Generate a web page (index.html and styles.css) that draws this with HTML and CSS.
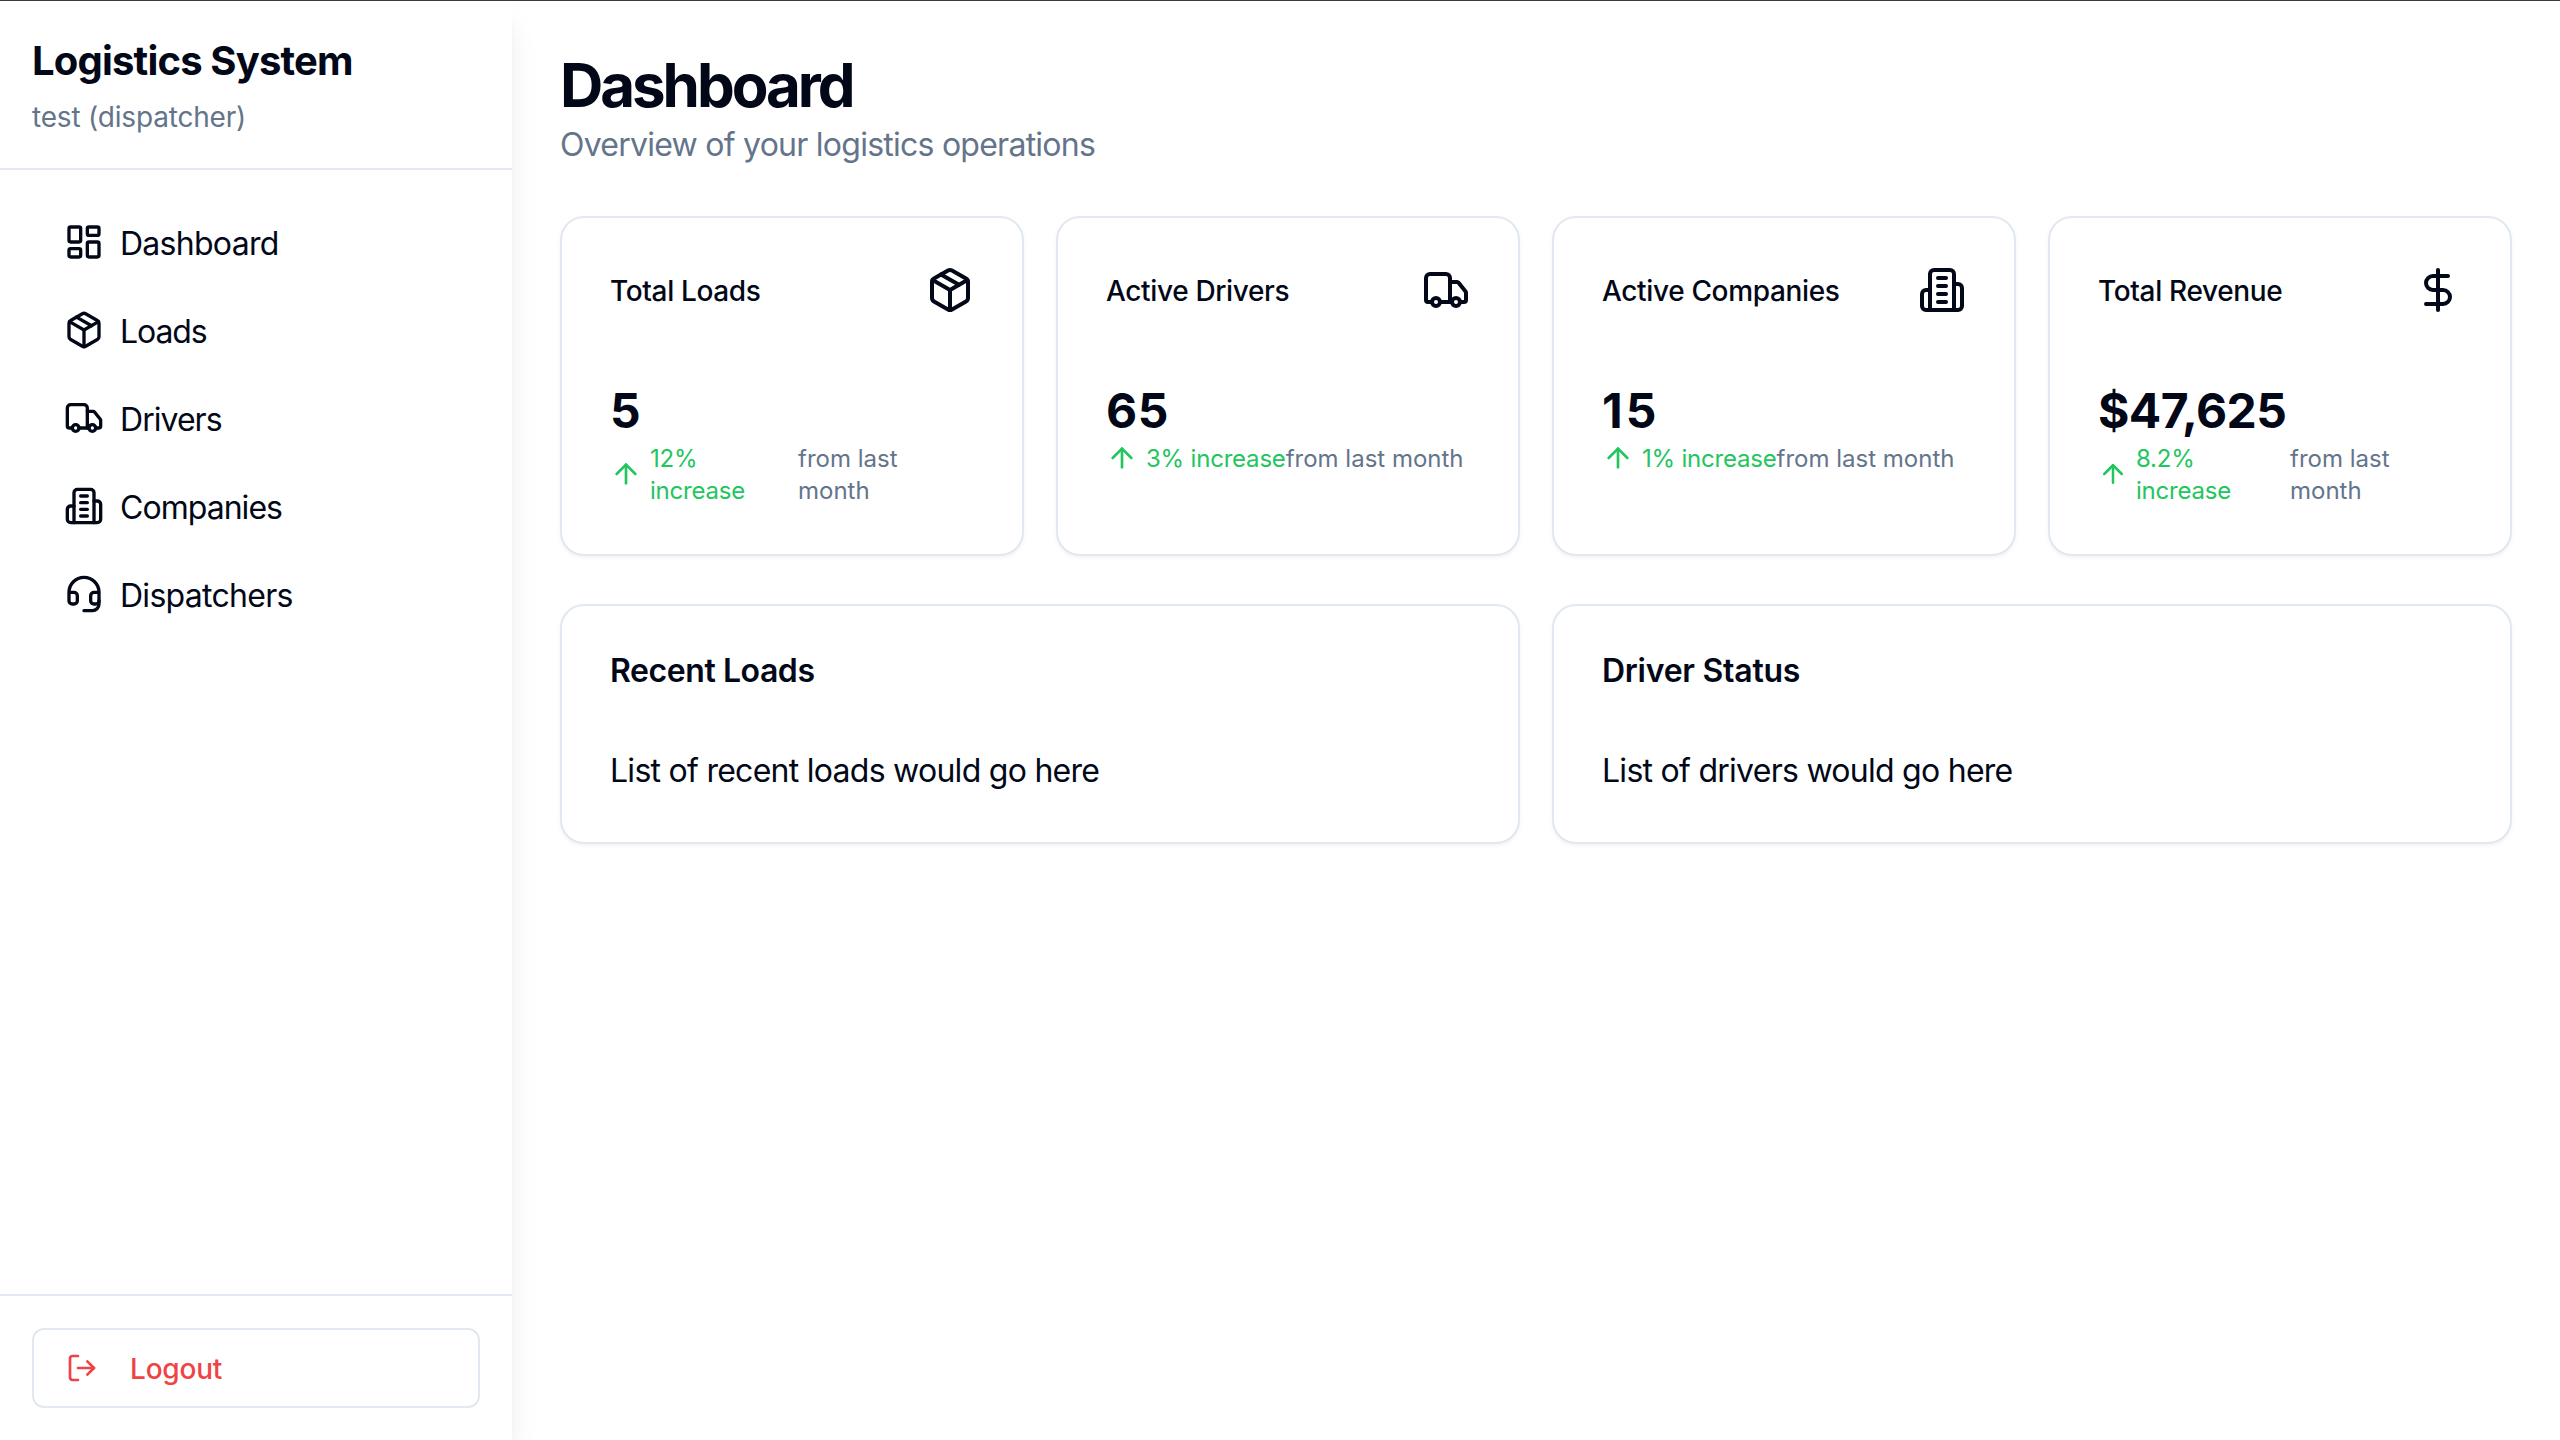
FILE: index.html
```
<!DOCTYPE html>
<html lang="en">
<head>
<meta charset="utf-8">
<title>Logistics System</title>
<link rel="stylesheet" href="styles.css">
</head>
<body>
<svg class="sprite" aria-hidden="true">
  <symbol id="package" viewBox="0 0 24 24"><path d="m7.5 4.27 9 5.15"/><path d="M21 8a2 2 0 0 0-1-1.73l-7-4a2 2 0 0 0-2 0l-7 4A2 2 0 0 0 3 8v8a2 2 0 0 0 1 1.73l7 4a2 2 0 0 0 2 0l7-4A2 2 0 0 0 21 16Z"/><path d="m3.3 7 8.7 5 8.7-5"/><path d="M12 22V12"/></symbol>
  <symbol id="truck" viewBox="0 0 24 24"><path d="M14 18V6a2 2 0 0 0-2-2H4a2 2 0 0 0-2 2v11a1 1 0 0 0 1 1h2"/><path d="M15 18H9"/><path d="M19 18h2a1 1 0 0 0 1-1v-3.65a1 1 0 0 0-.22-.624l-3.48-4.35A1 1 0 0 0 17.520 8H14"/><circle cx="17" cy="18" r="2"/><circle cx="7" cy="18" r="2"/></symbol>
  <symbol id="building" viewBox="0 0 24 24"><path d="M6 22V4a2 2 0 0 1 2-2h8a2 2 0 0 1 2 2v18Z"/><path d="M6 12H4a2 2 0 0 0-2 2v6a2 2 0 0 0 2 2h2"/><path d="M18 9h2a2 2 0 0 1 2 2v9a2 2 0 0 1-2 2h-2"/><path d="M10 6h4"/><path d="M10 10h4"/><path d="M10 14h4"/><path d="M10 18h4"/></symbol>
  <symbol id="arrow-up" viewBox="0 0 24 24"><path d="m5 12 7-7 7 7"/><path d="M12 19V5"/></symbol>
</svg>
<div class="app">
  <aside class="sidebar">
    <header class="brand">
      <h2 class="brand-name">Logistics System</h2>
      <p class="brand-user">test (dispatcher)</p>
    </header>
    <nav class="nav">
      <a class="nav-item"><svg class="icon" viewBox="0 0 24 24"><rect width="7" height="9" x="3" y="3" rx="1"/><rect width="7" height="5" x="14" y="3" rx="1"/><rect width="7" height="9" x="14" y="12" rx="1"/><rect width="7" height="5" x="3" y="16" rx="1"/></svg><span>Dashboard</span></a>
      <a class="nav-item"><svg class="icon"><use href="#package"/></svg><span class="tight">Loads</span></a>
      <a class="nav-item"><svg class="icon"><use href="#truck"/></svg><span class="snug">Drivers</span></a>
      <a class="nav-item"><svg class="icon"><use href="#building"/></svg><span class="snug">Companies</span></a>
      <a class="nav-item"><svg class="icon" viewBox="0 0 24 24"><path d="M3 11h3a2 2 0 0 1 2 2v3a2 2 0 0 1-2 2H5a2 2 0 0 1-2-2v-5Zm0 0a9 9 0 1 1 18 0m0 0v5a2 2 0 0 1-2 2h-1a2 2 0 0 1-2-2v-3a2 2 0 0 1 2-2h3Z"/><path d="M21 16v2a4 4 0 0 1-4 4h-5"/></svg><span>Dispatchers</span></a>
    </nav>
    <footer class="sidebar-footer">
      <button class="logout" type="button"><svg class="icon icon-sm" viewBox="0 0 24 24"><path d="M9 21H5a2 2 0 0 1-2-2V5a2 2 0 0 1 2-2h4"/><path d="m16 17 5-5-5-5"/><path d="M21 12H9"/></svg><span>Logout</span></button>
    </footer>
  </aside>
  <main class="main">
    <h1 class="page-title">Dashboard</h1>
    <p class="page-subtitle">Overview of your logistics operations</p>
    <section class="stats">
      <article class="card stat">
        <div class="stat-head"><h3>Total Loads</h3><svg class="icon icon-lg"><use href="#package"/></svg></div>
        <div class="value">5</div>
        <div class="trend"><div class="change change-loads"><svg class="icon icon-sm"><use href="#arrow-up"/></svg><span>12% increase</span></div><span class="period">from last month</span></div>
      </article>
      <article class="card stat">
        <div class="stat-head"><h3>Active Drivers</h3><svg class="icon icon-lg"><use href="#truck"/></svg></div>
        <div class="value value-spaced">65</div>
        <div class="trend"><div class="change"><svg class="icon icon-sm"><use href="#arrow-up"/></svg><span>3% increase</span></div><span>from last month</span></div>
      </article>
      <article class="card stat">
        <div class="stat-head"><h3>Active Companies</h3><svg class="icon icon-lg"><use href="#building"/></svg></div>
        <div class="value value-wide">15</div>
        <div class="trend"><div class="change"><svg class="icon icon-sm"><use href="#arrow-up"/></svg><span>1% increase</span></div><span>from last month</span></div>
      </article>
      <article class="card stat">
        <div class="stat-head"><h3>Total Revenue</h3><svg class="icon icon-lg" viewBox="0 0 24 24"><path d="M12 2v20"/><path d="M17 5H9.500a3.500 3.500 0 0 0 0 7h5a3.500 3.500 0 0 1 0 7H6"/></svg></div>
        <div class="value value-tight">$47,625</div>
        <div class="trend"><div class="change change-revenue"><svg class="icon icon-sm"><use href="#arrow-up"/></svg><span>8.2% increase</span></div><span class="period">from last month</span></div>
      </article>
    </section>
    <section class="panels">
      <article class="card panel"><h3 class="panel-loads">Recent Loads</h3><p>List of recent loads would go here</p></article>
      <article class="card panel"><h3>Driver Status</h3><p>List of drivers would go here</p></article>
    </section>
  </main>
</div>
</body>
</html>
```
FILE: styles.css
```
* { box-sizing: border-box; margin: 0; }

body {
  height: 1440px;
  overflow: hidden;
  background: #fff;
  color: #020817;
  font: 400 32px/48px Inter, "Liberation Sans", sans-serif;
}

/* hairline along the top of the window */
body::before {
  content: "";
  position: absolute;
  inset: 0 0 auto;
  z-index: 2;
  height: 1px;
  background: #3c3a3d;
}

.sprite { display: none; }

.icon {
  flex: none;
  width: 40px;
  height: 40px;
  fill: none;
  stroke: currentColor;
  stroke-width: 2;
  stroke-linecap: round;
  stroke-linejoin: round;
}
.icon-sm { width: 32px; height: 32px; }
.icon-lg { width: 48px; height: 48px; }

.app { display: flex; height: 100%; }

.sidebar {
  display: flex;
  flex-direction: column;
  flex: none;
  width: 512px;
  background: #fff;
  box-shadow: 0 20px 30px -6px rgb(0 0 0 / .1), 0 8px 12px -8px rgb(0 0 0 / .1);
}

.brand { padding: 33px 32px 30px; border-bottom: 2px solid #e2e8f0; }
.brand-name { font-size: 40px; font-weight: 700; line-height: 56px; letter-spacing: -.82px; }
.brand-user { margin-top: 7px; color: #64748b; font-size: 28px; line-height: 42px; letter-spacing: -.19px; }

.nav { display: flex; flex: 1; flex-direction: column; gap: 8px; padding: 32px; }
.nav-item {
  display: flex;
  align-items: center;
  gap: 16px;
  height: 80px;
  padding: 0 32px;
  letter-spacing: -.72px;
}
.nav-item span { padding-top: 3px; }
.tight { letter-spacing: -1.080px; }
.snug { letter-spacing: -.96px; }

.sidebar-footer { padding: 32px; border-top: 2px solid #e2e8f0; }
.logout {
  display: flex;
  align-items: center;
  gap: 32px;
  width: 100%;
  height: 80px;
  padding: 0 32px;
  border: 2px solid #e2e8f0;
  border-radius: 12px;
  background: #fff;
  color: #ef4444;
  font: 500 28px/40px Inter, "Liberation Sans", sans-serif;
  letter-spacing: -.2px;
}
.logout span { padding-top: 1px; }

.main { flex: 1; padding: 49px 48px 48px; }
.page-title { font-size: 60px; font-weight: 700; line-height: 72px; letter-spacing: -3.050px; }
.page-subtitle { color: #64748b; letter-spacing: -.75px; }

.stats { display: grid; grid-template-columns: repeat(4, 1fr); gap: 32px; margin-top: 47px; }
.card {
  border: 2px solid #e2e8f0;
  border-radius: 24px;
  background: #fff;
  box-shadow: 0 2px 4px rgb(0 0 0 / .05);
}
.stat { height: 340px; padding: 48px; }
.stat-head { display: flex; align-items: center; justify-content: space-between; }
.stat-head h3 { padding-top: 2px; font-size: 28px; font-weight: 500; line-height: 40px; letter-spacing: -.35px; }
.value { margin-top: 65px; font-size: 48px; font-weight: 700; line-height: 63px; }
.value-spaced { letter-spacing: .6px; }
.value-wide { letter-spacing: 3px; }
.value-tight { letter-spacing: -.6px; }
.trend { display: flex; align-items: center; color: #64748b; font-size: 24px; line-height: 32px; white-space: nowrap; }
.trend span { padding-top: 1px; margin-bottom: -1px; }
.change { display: flex; align-items: center; gap: 8px; color: #22c55e; letter-spacing: -.2px; }
.change-loads, .change-revenue, .period { white-space: normal; }
.change-loads { width: 188px; padding-right: 30px; }
.change-revenue { width: 192px; padding-right: 30px; }
.change-revenue .icon { width: 30px; }
.period { width: 120px; }

.panels { display: grid; grid-template-columns: repeat(2, 1fr); gap: 32px; margin-top: 48px; }
.panel { height: 240px; padding: 49px 48px 47px; }
.panel h3 { font-size: 32px; font-weight: 600; line-height: 32px; letter-spacing: -.26px; }
.panel .panel-loads { letter-spacing: -.43px; }
.panel p { margin-top: 60px; letter-spacing: -.73px; }
```
